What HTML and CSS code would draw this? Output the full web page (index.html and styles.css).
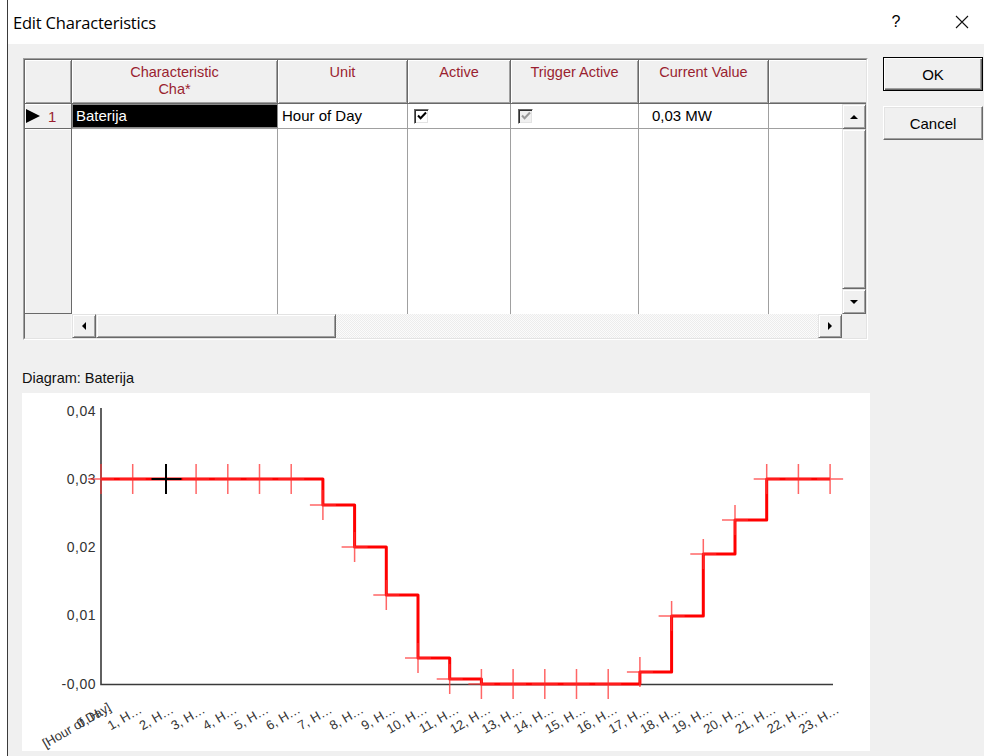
FILE: index.html
```html
<!DOCTYPE html>
<html lang="en">
<head>
<meta charset="utf-8">
<title>Edit Characteristics</title>
<link rel="stylesheet" href="styles.css">
</head>
<body>
<div class="window">
  <header class="titlebar">
    <span class="title">Edit Characteristics</span>
    <span class="help">?</span>
    <span class="close">
      <svg width="14" height="14" viewBox="0 0 14 14"><path d="M1 1L13 13M13 1L1 13" stroke="#111" stroke-width="1.1" fill="none"/></svg>
    </span>
  </header>

  <div class="client">
    <div class="main">
      <div class="table">
        <div class="table-in">
          <div class="thead">
            <div class="th w-ind"></div>
            <div class="th w-c1">Characteristic<br>Cha*</div>
            <div class="th w-c2">Unit</div>
            <div class="th w-c3">Active</div>
            <div class="th w-c4">Trigger Active</div>
            <div class="th w-c5">Current Value</div>
            <div class="th w-c6 last"></div>
          </div>

          <div class="tbody">
            <div class="cells">
              <div class="ind"><span class="pointer"></span><span class="rownum">1</span></div>
              <div class="td sel"><span class="edit">Baterija</span></div>
              <div class="td">Hour of Day</div>
              <div class="td"><span class="check on"><svg width="12" height="12" viewBox="0 0 12 12"><path d="M2 5.5l2.6 2.8L10 2.5" stroke="#000" stroke-width="2" fill="none"/></svg></span></div>
              <div class="td"><span class="check off"><svg width="12" height="12" viewBox="0 0 12 12"><path d="M2 5.5l2.6 2.8L10 2.5" stroke="#9a9a9a" stroke-width="2" fill="none"/></svg></span></div>
              <div class="td val">0,03 MW</div>
              <div class="td end"></div>

              <div class="ind fill"></div>
              <div class="td blank"></div>
              <div class="td blank"></div>
              <div class="td blank"></div>
              <div class="td blank"></div>
              <div class="td blank"></div>
              <div class="td blank end"></div>
            </div>
            <div class="vscroll">
              <div class="sbtn"><span class="arr up"></span></div>
              <div class="sbtn thumb-v"></div>
              <div class="sbtn"><span class="arr down"></span></div>
            </div>
          </div>

          <div class="hrow">
            <div class="hs-ind"></div>
            <div class="sbtn hbtn"><span class="arr left"></span></div>
            <div class="sbtn thumb-h"></div>
            <div class="track"></div>
            <div class="sbtn hbtn"><span class="arr right"></span></div>
            <div class="corner"></div>
          </div>
        </div>
      </div>

      <div class="diag-label">Diagram: Baterija</div>

      <svg class="chart" width="848" height="358" viewBox="22 392 848 358">
        <!-- axes -->
        <path class="axis" d="M101 407V683.5H833"/>
        <!-- value labels -->
        <g class="ylab">
          <text x="96" y="415">0,04</text>
          <text x="96" y="483">0,03</text>
          <text x="96" y="551">0,02</text>
          <text x="96" y="619">0,01</text>
          <text x="96" y="688">-0,00</text>
        </g>
        <!-- step curve -->
        <path class="curve" d="M101 478H322.9V504H354.6V546H386.3V594H418V657H449.7V678H481.4V683H639.9V671H671.6V615H703.3V553H735V519H766.7V478H830.1"/>
        <!-- point markers -->
        <g class="mark">
          <path d="M88 478h26M101 463v30"/>
          <path d="M119.7 478h26M132.7 463v30"/>
          <path d="M183.1 478h26M196.1 463v30"/>
          <path d="M214.8 478h26M227.8 463v30"/>
          <path d="M246.5 478h26M259.5 463v30"/>
          <path d="M278.2 478h26M291.2 463v30"/>
          <path d="M309.9 504h26M322.9 489v30"/>
          <path d="M341.6 546h26M354.6 531v30"/>
          <path d="M373.3 594h26M386.3 579v30"/>
          <path d="M405 657h26M418 642v30"/>
          <path d="M436.7 678h26M449.7 663v30"/>
          <path d="M468.4 683h26M481.4 668v30"/>
          <path d="M500.1 683h26M513.1 668v30"/>
          <path d="M531.8 683h26M544.8 668v30"/>
          <path d="M563.5 683h26M576.5 668v30"/>
          <path d="M595.2 683h26M608.2 668v30"/>
          <path d="M626.9 671h26M639.9 656v30"/>
          <path d="M658.6 615h26M671.6 600v30"/>
          <path d="M690.3 553h26M703.3 538v30"/>
          <path d="M722 519h26M735 504v30"/>
          <path d="M753.7 478h26M766.7 463v30"/>
          <path d="M785.4 478h26M798.4 463v30"/>
          <path d="M817.1 478h26M830.1 463v30"/>
        </g>
        <path class="mark-sel" d="M151.5 478h30M166 463v30"/>
        <!-- hour labels -->
        <g class="xlab">
          <text transform="translate(112 709) rotate(-30)">[Hour of Day]</text>
          <text transform="translate(112 709) rotate(-30)">0, H…</text>
          <text transform="translate(142.7 711) rotate(-30)">1, H…</text>
          <text transform="translate(174.4 711) rotate(-30)">2, H…</text>
          <text transform="translate(206.1 711) rotate(-30)">3, H…</text>
          <text transform="translate(237.8 711) rotate(-30)">4, H…</text>
          <text transform="translate(269.5 711) rotate(-30)">5, H…</text>
          <text transform="translate(301.2 711) rotate(-30)">6, H…</text>
          <text transform="translate(332.9 711) rotate(-30)">7, H…</text>
          <text transform="translate(364.6 711) rotate(-30)">8, H…</text>
          <text transform="translate(396.3 711) rotate(-30)">9, H…</text>
          <text transform="translate(428 711) rotate(-30)">10, H…</text>
          <text transform="translate(459.7 711) rotate(-30)">11, H…</text>
          <text transform="translate(491.4 711) rotate(-30)">12, H…</text>
          <text transform="translate(523.1 711) rotate(-30)">13, H…</text>
          <text transform="translate(554.8 711) rotate(-30)">14, H…</text>
          <text transform="translate(586.5 711) rotate(-30)">15, H…</text>
          <text transform="translate(618.2 711) rotate(-30)">16, H…</text>
          <text transform="translate(649.9 711) rotate(-30)">17, H…</text>
          <text transform="translate(681.6 711) rotate(-30)">18, H…</text>
          <text transform="translate(713.3 711) rotate(-30)">19, H…</text>
          <text transform="translate(745 711) rotate(-30)">20, H…</text>
          <text transform="translate(776.7 711) rotate(-30)">21, H…</text>
          <text transform="translate(808.4 711) rotate(-30)">22, H…</text>
          <text transform="translate(840.1 711) rotate(-30)">23, H…</text>
        </g>
      </svg>
    </div>

    <div class="buttons">
      <button class="btn default">OK</button>
      <button class="btn">Cancel</button>
    </div>
  </div>
</div>
</body>
</html>
```

FILE: styles.css
```css
* { box-sizing: border-box; }

html, body { margin: 0; padding: 0; }

body {
  width: 984px;
  height: 756px;
  overflow: hidden;
  background: #fff;
  font-family: "Liberation Sans", Arial, sans-serif;
  font-size: 15px;
  color: #000;
}

/* dialog frame */
.window {
  margin-left: 7px;
  height: 756px;
  border-left: 1px solid #3a3a3a;
  background: #f0f0f0;
  display: flex;
  flex-direction: column;
}

.titlebar {
  height: 44px;
  flex: none;
  background: #fff;
  display: flex;
  align-items: center;
  padding: 0 12px 0 5px;
  font-family: "Open Sans", "Liberation Sans", sans-serif;
  font-size: 16.5px;
}
.title { flex: 1; letter-spacing: -0.2px; }
.help {
  width: 20px;
  text-align: center;
  margin-right: 46px;
  font-family: "Liberation Sans", Arial, sans-serif;
  font-size: 16px;
}
.close { width: 20px; display: flex; justify-content: center; }

.client {
  flex: 1;
  display: flex;
  align-items: flex-start;
  gap: 13px;
  padding: 14px 0 0 14px;
}

.main {
  width: 848px;
  display: flex;
  flex-direction: column;
}

/* characteristics grid */
.table {
  margin-left: 1px;
  width: 845px;
  border: 1px solid;
  border-color: #a0a0a0 #fff #fff #a0a0a0;
}
.table-in {
  border: 1px solid;
  border-color: #696969 #e3e3e3 #e3e3e3 #696969;
  display: flex;
  flex-direction: column;
}

.thead { display: flex; height: 44px; }
.th {
  background: #f0f0f0;
  border-right: 1px solid #696969;
  border-bottom: 1px solid #696969;
  box-shadow: inset 1px 1px #fff, inset -1px -1px #a0a0a0;
  color: #9a1f30;
  text-align: center;
  padding-top: 4px;
  line-height: 17px;
  font-size: 14.5px;
}
.th.last { border-right: none; box-shadow: inset 1px 1px #fff, inset 0 -1px #a0a0a0; }

.w-ind { width: 47px; }
.w-c1 { width: 206px; }
.w-c2 { width: 130px; }
.w-c3 { width: 103px; }
.w-c4 { width: 128px; }
.w-c5 { width: 130px; }
.w-c6 { width: 97px; }

.tbody { display: flex; height: 210px; }

.cells {
  width: 817px;
  display: grid;
  grid-template-columns: 47px 206px 130px 103px 128px 130px 73px;
  grid-template-rows: 25px 1fr;
  background: #fff;
}

.ind {
  background: #f0f0f0;
  border-right: 1px solid #696969;
  border-bottom: 1px solid #696969;
  box-shadow: inset 1px 1px #fff;
  display: flex;
  align-items: center;
  padding-left: 1px;
}
.pointer {
  width: 0;
  height: 0;
  border-left: 14px solid #000;
  border-top: 7.5px solid transparent;
  border-bottom: 7.5px solid transparent;
}
.rownum { color: #9a1f30; margin-left: 8px; }

.td {
  border-right: 1px solid #a0a0a0;
  border-bottom: 1px solid #a0a0a0;
  line-height: 24px;
  padding-left: 4px;
  white-space: nowrap;
  display: flex;
  align-items: center;
}
.td.blank { border-bottom: none; }
.td.end { border-right: none; }
.td.val { padding-left: 13px; }

.td.sel { padding: 1px 0 1px 1px; }
.edit {
  flex: 1;
  align-self: stretch;
  background: #000;
  color: #fff;
  box-shadow: 0 0 0 1px #8a8a8a;
  padding-left: 3px;
  line-height: 22px;
}

.check {
  width: 15px;
  height: 15px;
  margin-left: 2px;
  border: 1px solid;
  border-color: #696969 #fff #fff #696969;
  box-shadow: inset 1px 1px #303030, inset -1px -1px #e3e3e3;
  display: flex;
  align-items: center;
  justify-content: center;
}
.check.on { background: #fff; }
.check.off { background: #f0f0f0; margin-left: 3px; }

/* scroll bars */
.sbtn {
  background: #f0f0f0;
  border: 1px solid;
  border-color: #e3e3e3 #696969 #696969 #e3e3e3;
  box-shadow: inset 1px 1px #fff, inset -1px -1px #a0a0a0;
  display: flex;
  align-items: center;
  justify-content: center;
}

.vscroll { width: 24px; display: flex; flex-direction: column; }
.vscroll .sbtn { height: 25px; }
.vscroll .thumb-v { height: 160px; }

.hrow { display: flex; height: 24px; }
.hs-ind { width: 47px; background: #f0f0f0; border-right: 1px solid #f8f8f8; }
.hbtn { width: 24px; }
.thumb-h { width: 240px; }
.track {
  width: 482px;
  background: repeating-conic-gradient(#fbfbfb 0 25%, #ececec 0 50%) 0 0 / 2px 2px;
}
.corner { width: 24px; background: #f0f0f0; }

.arr { width: 0; height: 0; }
.arr.up { border-left: 4px solid transparent; border-right: 4px solid transparent; border-bottom: 4px solid #000; }
.arr.down { border-left: 4px solid transparent; border-right: 4px solid transparent; border-top: 4px solid #000; }
.arr.left { border-top: 4px solid transparent; border-bottom: 4px solid transparent; border-right: 4px solid #000; }
.arr.right { border-top: 4px solid transparent; border-bottom: 4px solid transparent; border-left: 4px solid #000; }

/* diagram */
.diag-label {
  margin-top: 29px;
  line-height: 18px;
  height: 18px;
  font-size: 14.5px;
  color: #111;
}

.chart {
  display: block;
  margin-top: 6px;
  background: #fff;
}
.axis { fill: none; stroke: #3a3a3a; stroke-width: 1.6; }
.curve { fill: none; stroke: #ff0000; stroke-width: 3; stroke-linejoin: round; }
.mark path { fill: none; stroke: #ff3333; stroke-opacity: 0.75; stroke-width: 1.5; }
.mark-sel { fill: none; stroke: #000; stroke-width: 2; }
.ylab text {
  font-family: "Liberation Sans", Arial, sans-serif;
  font-size: 14px;
  fill: #333;
  text-anchor: end;
  letter-spacing: 0.5px;
}
.xlab text {
  font-family: "Liberation Sans", Arial, sans-serif;
  font-size: 13px;
  fill: #333;
  text-anchor: end;
}

/* buttons */
.buttons {
  display: flex;
  flex-direction: column;
  gap: 15px;
  margin-top: -1px;
}
.btn {
  width: 100px;
  height: 34px;
  font-family: "Liberation Sans", Arial, sans-serif;
  font-size: 15px;
  color: #000;
  background: #f0f0f0;
  border: 1px solid;
  border-color: #fff #696969 #696969 #fff;
  box-shadow: inset -1px -1px #a0a0a0, inset 1px 1px #e3e3e3;
  padding: 0;
}
.btn.default {
  border: 1px solid #000;
  box-shadow: inset 1px 1px #fff, inset -1px -1px #696969, inset -2px -2px #a0a0a0;
}
```
